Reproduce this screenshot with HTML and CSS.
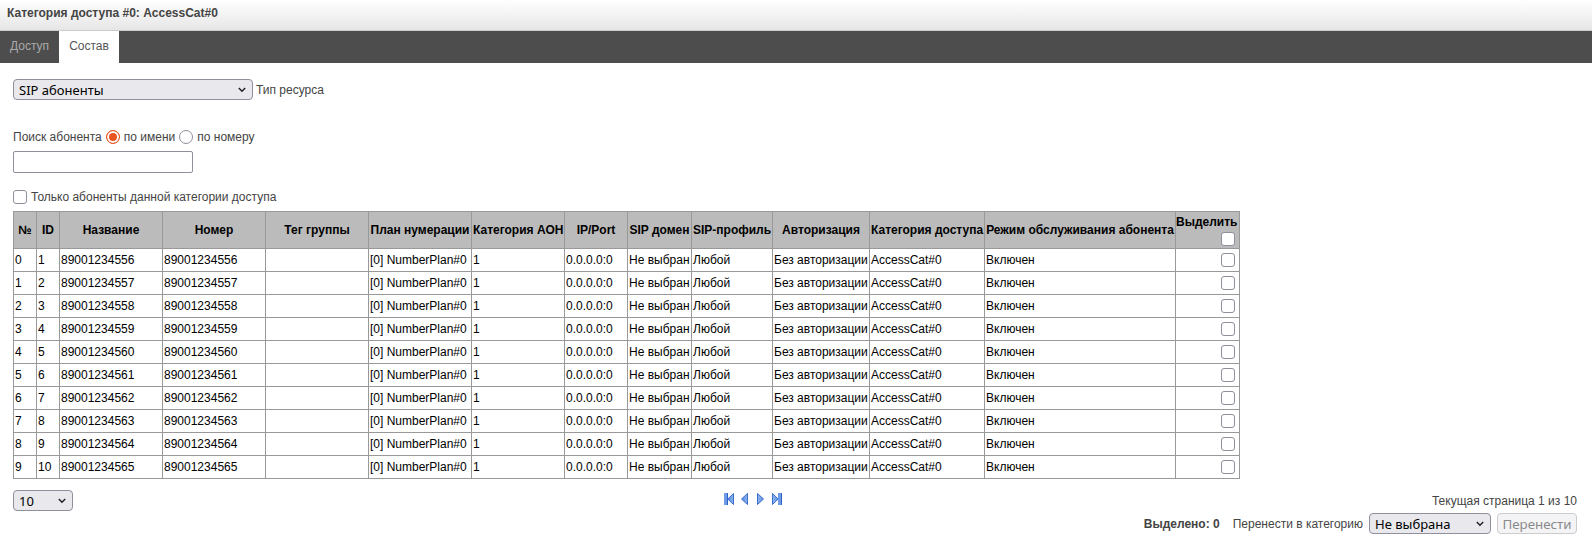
FILE: index.html
```html
<!DOCTYPE html>
<html lang="ru">
<head>
<meta charset="utf-8">
<title>Категория доступа</title>
<link rel="stylesheet" href="styles.css">
</head>
<body>
<header class="title">Категория доступа #0: AccessCat#0</header>
<nav class="tabs"><a class="tab">Доступ</a><a class="tab active">Состав</a></nav>
<main class="content">
  <div class="row-type"><select class="sel sel-type"><option>SIP абоненты</option></select><span>Тип ресурса</span></div>
  <div class="row-search"><span>Поиск абонента</span><input type="radio" name="s" checked class="radio"><span>по имени</span><input type="radio" name="s" class="radio"><span>по номеру</span></div>
  <input type="text" class="search">
  <label class="row-only"><input type="checkbox" class="check"><span>Только абоненты данной категории доступа</span></label>
  <table class="grid">
    <colgroup><col class="c0"><col class="c1"><col class="c2"><col class="c3"><col class="c4"><col class="c5"><col class="c6"><col class="c7"><col class="c8"><col class="c9"><col class="c10"><col class="c11"><col class="c12"><col class="c13"></colgroup>
    <thead><tr><th>№</th><th>ID</th><th>Название</th><th>Номер</th><th>Тег группы</th><th>План нумерации</th><th>Категория АОН</th><th>IP/Port</th><th>SIP домен</th><th>SIP-профиль</th><th>Авторизация</th><th>Категория доступа</th><th>Режим обслуживания абонента</th><th class="pick-h"><div>Выделить</div><input type="checkbox" class="check"></th></tr></thead>
    <tbody id="rows"></tbody>
  </table>
  <div class="pager">
    <select class="sel sel-size"><option>10</option></select>
    <svg class="nav-icons" width="58" height="12" viewBox="0 0 58 12">
      <defs>
        <linearGradient id="fillL" x1="0" x2="1" y1="0" y2="0"><stop offset="0" stop-color="#4f84de"/><stop offset="1" stop-color="#93b4ec"/></linearGradient>
        <linearGradient id="fillR" x1="0" x2="1" y1="0" y2="0"><stop offset="0" stop-color="#93b4ec"/><stop offset="1" stop-color="#5f90e2"/></linearGradient>
      </defs>
      <rect x="0" y="0" width="4" height="12" fill="#6f9ae4"/><rect x="3" y="0" width="1" height="12" fill="#2c62c8"/>
      <path d="M9.500 0.500 L3.800 6 L9.500 11.500 Z" fill="url(#fillL)" stroke="#3a6fce" stroke-width="1"/>
      <path d="M23.500 0.500 L17.500 6 L23.500 11.500 Z" fill="url(#fillL)" stroke="#3a6fce" stroke-width="1"/>
      <path d="M33.500 0.500 L39.500 6 L33.500 11.500 Z" fill="url(#fillR)" stroke="#3a6fce" stroke-width="1"/>
      <path d="M48.500 0.500 L54.200 6 L48.500 11.500 Z" fill="url(#fillR)" stroke="#3a6fce" stroke-width="1"/>
      <rect x="54" y="0" width="4" height="12" fill="#6f9ae4"/><rect x="57" y="0" width="1" height="12" fill="#2c62c8"/>
    </svg>
    <div class="right">
      <div class="page-info">Текущая страница 1 из 10</div>
      <div class="move"><b>Выделено: 0</b><span class="move-l">Перенести в категорию</span><select class="sel sel-cat"><option>Не выбрана</option></select><button class="btn" disabled>Перенести</button></div>
    </div>
  </div>
</main>
<script src="app.js"></script>
</body>
</html>
```
FILE: styles.css
```css
* { box-sizing: border-box; }
html, body { margin: 0; padding: 0; }
body { font-family: "Liberation Sans", Arial, sans-serif; font-size: 12px; color: #444; background: #fff; height: 547px; overflow: hidden; }
.title { height: 31px; padding: 6px 7px 0; font-weight: bold; color: #444; background: linear-gradient(#fff, #e6e6e6); border-bottom: 1px solid #ccc; line-height: 14px; }
.tabs { height: 32px; background: #4d4d4d; display: flex; }
.tab { width: 59px; display: flex; align-items: center; justify-content: center; color: #aaa; padding-bottom: 2px; }
.tab.active { background: #fff; color: #555; width: 60px; }
.content { padding: 16px 13px 0; }
.row-type { display: flex; align-items: center; gap: 3px; height: 21px; }
.sel { appearance: none; font-family: "Noto Sans", sans-serif; font-size: 13px; color: #000; background-color: #e9e9ed; background-image: url("data:image/svg+xml,%3Csvg xmlns='http://www.w3.org/2000/svg' width='8' height='6'%3E%3Cpath d='M0.8 1 L4 4.200 L7.200 1' fill='none' stroke='%23222' stroke-width='1.500'/%3E%3C/svg%3E"); background-repeat: no-repeat; background-position: right 6px center; border: 1px solid #8f8f9d; border-radius: 4px; padding: 0 0 0 5px; height: 21px; margin: 0; }
.sel-type { width: 240px; }
.row-search { display: flex; align-items: center; margin-top: 28px; height: 17px; }
.radio { appearance: none; width: 14px; height: 14px; margin: 0 4px; background: #fff; border: 1px solid #8f8f9d; border-radius: 50%; }
.radio:checked { background: #e95420; border-color: #e95420; box-shadow: inset 0 0 0 2px #fff; }
.search { display: block; width: 180px; height: 22px; margin: 6px 0 0; border: 1px solid #8f8f9d; border-radius: 2px; background: #fff; }
.row-only { display: flex; align-items: center; gap: 4px; margin-top: 16px; height: 15px; }
.check { appearance: none; width: 14px; height: 14px; margin: 0; background: #fff; border: 1px solid #8f8f9d; border-radius: 3px; }
.grid { border-collapse: collapse; table-layout: fixed; width: 1226px; margin-top: 7px; color: #000; font-size: 12px; }
.grid th, .grid td { border: 1px solid #999; padding: 0 1px; overflow: hidden; white-space: nowrap; }
.grid th { background: #bbb; height: 37px; text-align: center; line-height: 14px; }
.grid td { height: 23px; line-height: 14px; }
.grid .check { display: block; margin-left: auto; margin-right: 3px; }
.pick-h div { text-align: left; margin: 0 0 3px -1px; }
.c0 { width: 23px; } .c1 { width: 23px; } .c2 { width: 103px; } .c3 { width: 103px; } .c4 { width: 103px; } .c5 { width: 103px; } .c6 { width: 93px; } .c7 { width: 63px; } .c8 { width: 64px; } .c9 { width: 81px; } .c10 { width: 97px; } .c11 { width: 115px; } .c12 { width: 191px; } .c13 { width: 64px; }
.pager { display: flex; justify-content: space-between; align-items: flex-start; margin-top: 11px; position: relative; width: 1564px; }
.sel-size { width: 60px; }
.nav-icons { position: absolute; left: 711px; top: 3px; }
.right { display: flex; flex-direction: column; align-items: flex-end; }
.page-info { line-height: 14px; color: #444; margin-top: 4px; }
.move { display: flex; align-items: center; margin-top: 5px; height: 21px; }
.move-l { margin: 0 6px 0 13px; }
.sel-cat { width: 122px; }
.btn { font-family: "Noto Sans", sans-serif; font-size: 13.33px; height: 21px; width: 80px; margin-left: 6px; padding: 0; color: #8a8a8a; background: #f4f4f6; border: 1px solid #ccc; border-radius: 4px; }
```
FILE: app.js
```js
var body = document.getElementById('rows');
var html = '';
for (var i = 0; i < 10; i++) {
  var n = 89001234556 + i;
  html += '<tr><td>' + i + '</td><td>' + (i + 1) + '</td><td>' + n + '</td><td>' + n + '</td><td></td><td>[0] NumberPlan#0</td><td>1</td><td>0.0.0.0:0</td><td>Не выбран</td><td>Любой</td><td>Без авторизации</td><td>AccessCat#0</td><td>Включен</td><td><input type="checkbox" class="check"></td></tr>';
}
body.innerHTML = html;
```
